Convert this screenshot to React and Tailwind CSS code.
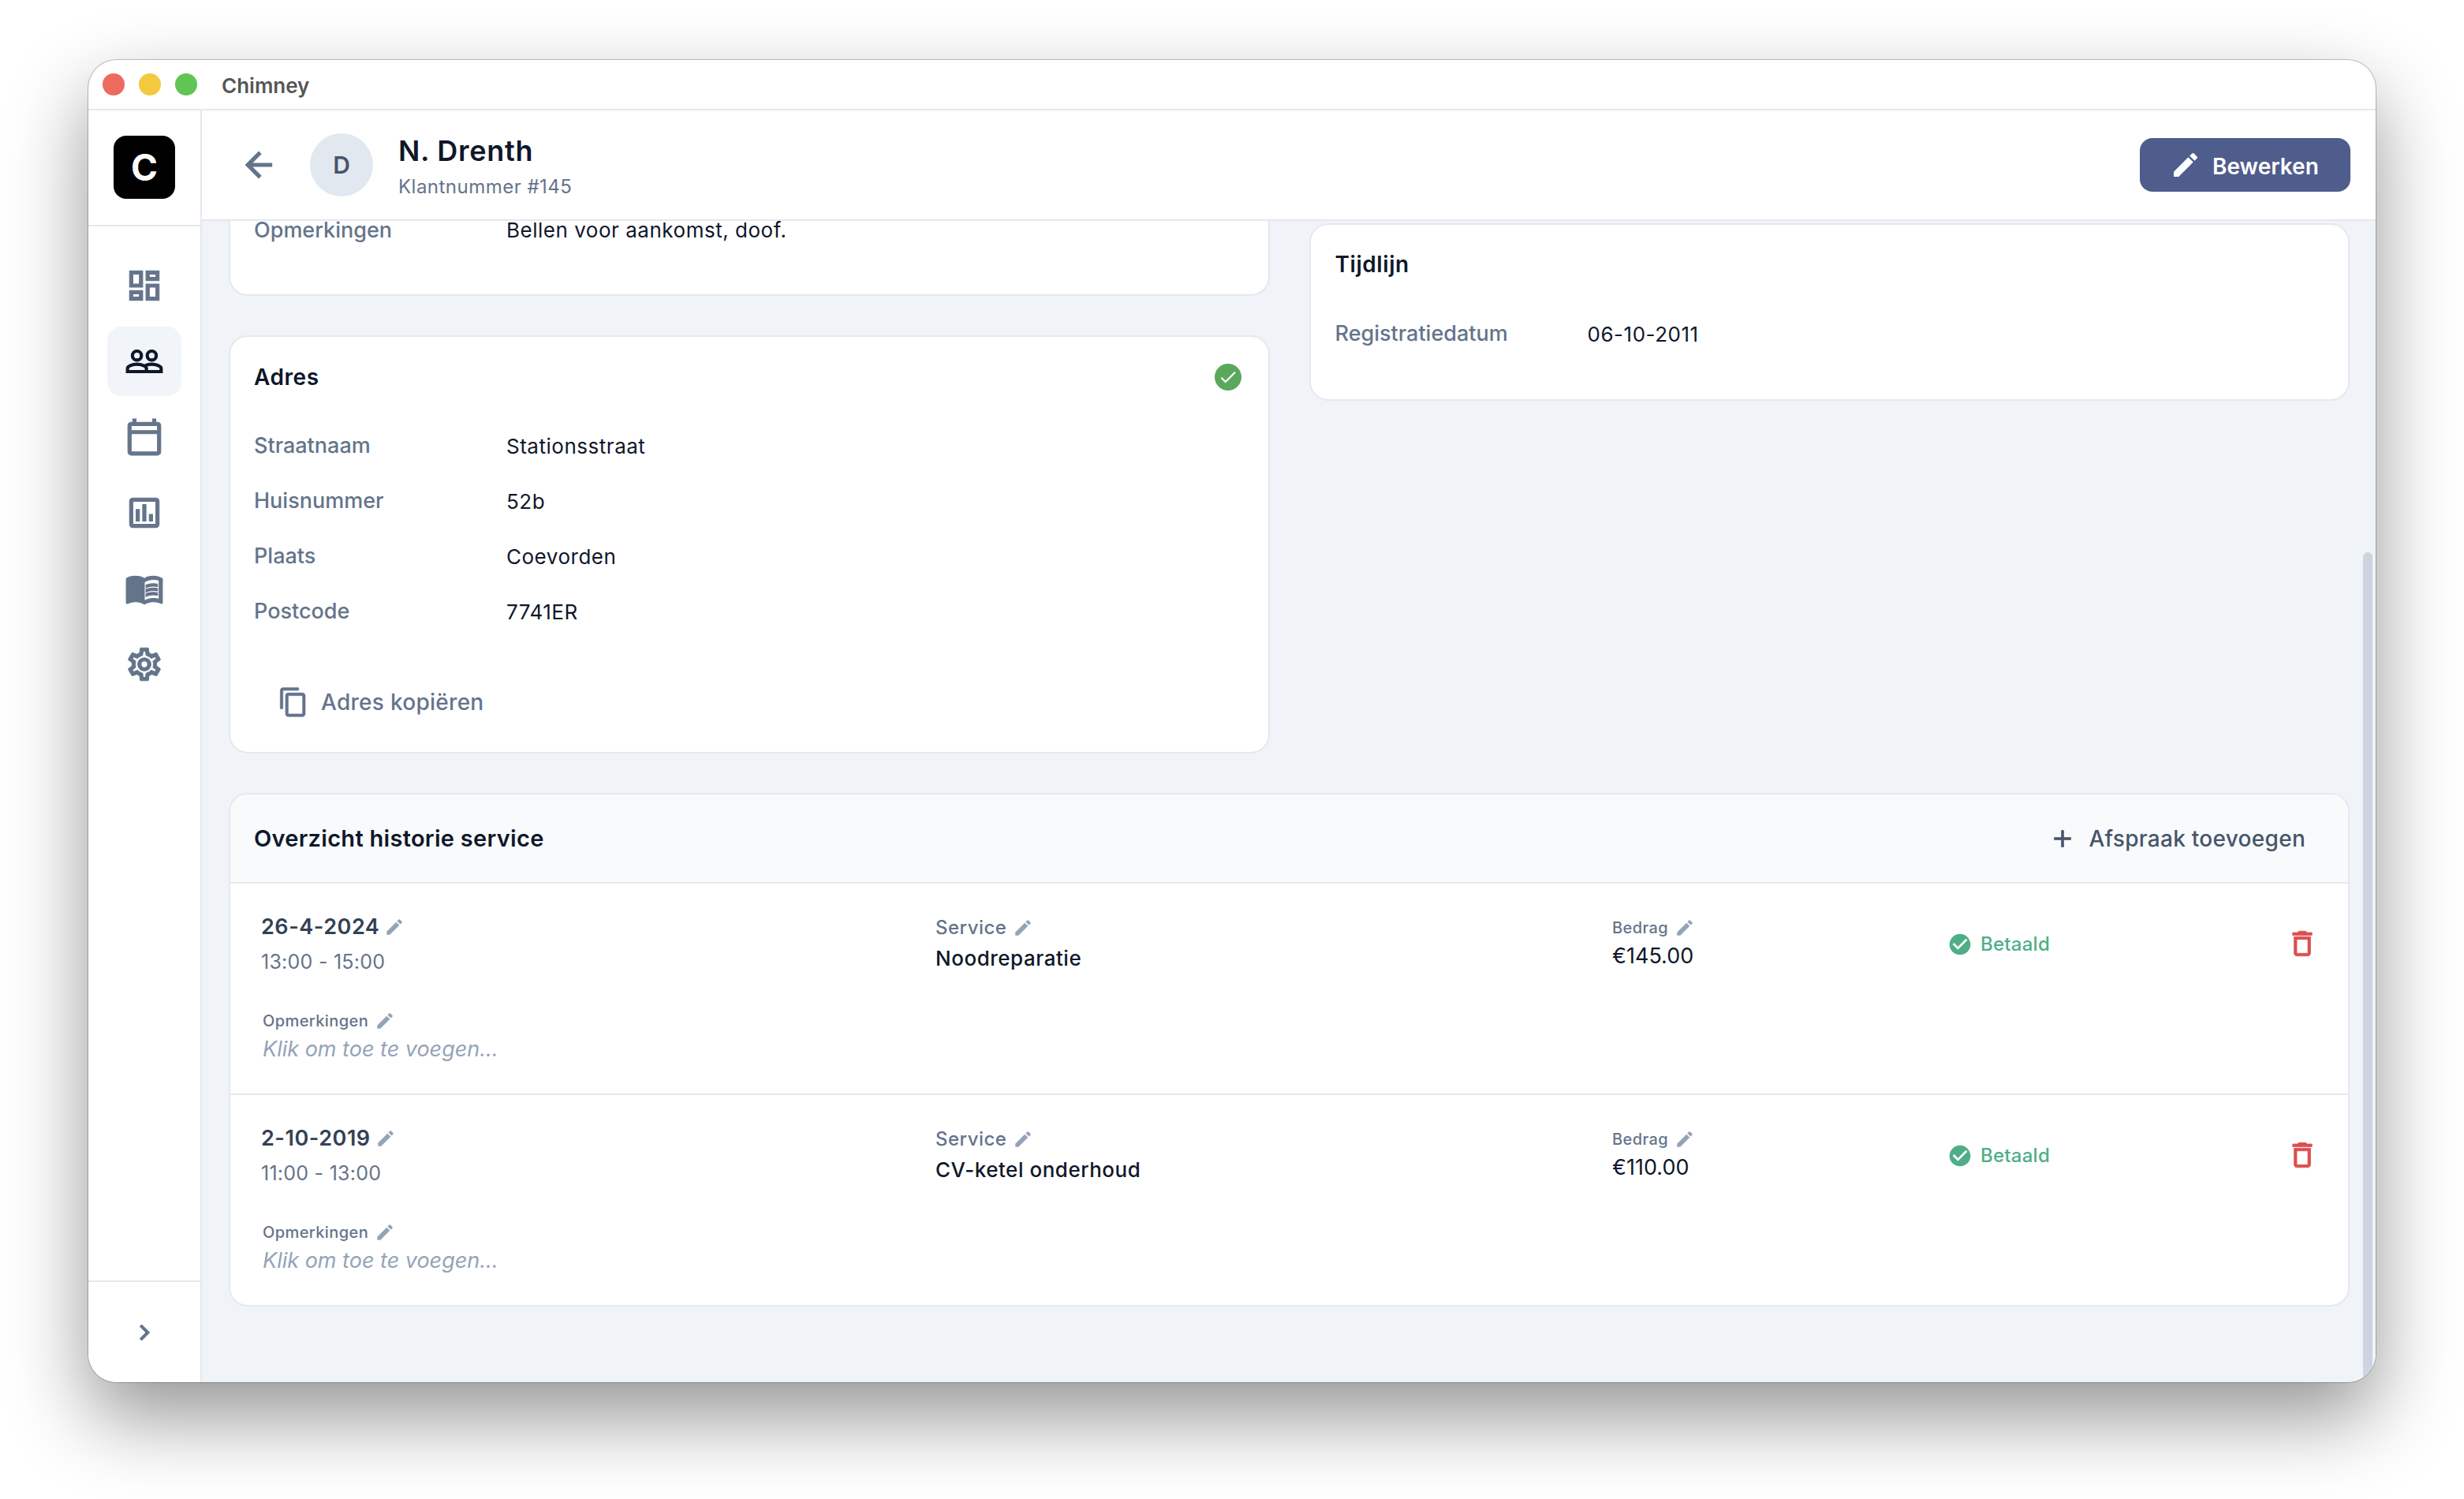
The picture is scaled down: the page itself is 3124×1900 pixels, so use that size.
import React from "react";
import {
  MdArrowBack,
  MdCheck,
  MdCheckCircle,
  MdChevronRight,
  MdEdit,
  MdMenuBook,
  MdOutlineAssessment,
  MdOutlineCalendarToday,
  MdOutlineContentCopy,
  MdOutlineDashboard,
  MdOutlineDelete,
  MdOutlineSettings,
  MdPeopleOutline,
  MdAdd,
} from "react-icons/md";

// the md icons carry an empty 24x24 path, hide it so a stroke does not draw a box
const heavy = "[&_path[fill=none]]:hidden";

const navItems = [
  { icon: MdOutlineDashboard },
  { icon: MdPeopleOutline, active: true },
  { icon: MdOutlineCalendarToday },
  { icon: MdOutlineAssessment },
  { icon: MdMenuBook },
  { icon: MdOutlineSettings },
];

const address = [
  ["Straatnaam", "Stationsstraat"],
  ["Huisnummer", "52b"],
  ["Plaats", "Coevorden"],
  ["Postcode", "7741ER"],
];

const services = [
  { date: "26-4-2024", time: "13:00 - 15:00", service: "Noodreparatie", amount: "€145.00" },
  { date: "2-10-2019", time: "11:00 - 13:00", service: "CV-ketel onderhoud", amount: "€110.00" },
];

function Sidebar() {
  return (
    <aside className="w-[144px] shrink-0 flex flex-col bg-white border-r-2 border-[#e5e8ef]">
      <div className="h-[147px] shrink-0 border-b-2 border-[#e5e8ef] pt-[32px] pl-[32px]">
        <div className="w-[78px] h-[80px] rounded-[16px] bg-black flex items-center justify-center text-white text-[46px] font-bold leading-none">
          C
        </div>
      </div>
      <nav className="flex-1 flex flex-col gap-[8px] pt-[31px] pl-[24px]">
        {navItems.map((item, i) => {
          const Icon = item.icon;
          return (
            <div
              key={i}
              className={
                item.active
                  ? "w-[94px] h-[88px] rounded-[18px] bg-[#f1f5f9] flex items-center justify-center text-[#0f172a]"
                  : "w-[94px] h-[88px] flex items-center justify-center text-[#64748b]"
              }
            >
              <Icon size={50} strokeWidth={0.5} className={heavy} />
            </div>
          );
        })}
      </nav>
      <div className="h-[129px] shrink-0 border-t-2 border-[#e5e8ef] flex items-center justify-center text-[#64748b]">
        <MdChevronRight size={40} strokeWidth={0.6} className={heavy} />
      </div>
    </aside>
  );
}

function Header() {
  return (
    <header className="h-[140px] shrink-0 bg-white border-b-2 border-[#e5e8ef] flex items-center pl-[47px] pr-[32px]">
      <MdArrowBack size={50} strokeWidth={0.5} className={heavy + " text-[#64748b] shrink-0"} />
      <div className="ml-[40px] w-[80px] h-[80px] rounded-full bg-[#e2e8f0] flex items-center justify-center text-[#475569] text-[30px] font-semibold">
        D
      </div>
      <div className="ml-[32px] pt-[4px]">
        <div className="text-[36px] leading-[44px] font-semibold text-[#0f172a] tracking-[0.02em]">N. Drenth</div>
        <div className="mt-[8px] text-[24px] leading-[32px] text-[#64748b] tracking-[0.02em]">Klantnummer #145</div>
      </div>
      <button className="ml-auto w-[267px] h-[68px] rounded-[16px] bg-[#4f5d8c] text-white flex items-center pl-[38px] text-[28px] font-semibold">
        <MdEdit size={40} className="shrink-0" />
        <span className="ml-[14px] pt-[3px]">Bewerken</span>
      </button>
    </header>
  );
}

function Field({ label, value, rowClass = "h-[40px]" }) {
  return (
    <div className={"flex items-center " + rowClass}>
      <div className="w-[320px] shrink-0 text-[27px] font-medium text-[#64748b]">{label}</div>
      <div className="text-[26px] text-[#0f172a] tracking-[0.02em]">{value}</div>
    </div>
  );
}

function AddressCard() {
  return (
    <section className="h-[530px] bg-white rounded-[24px] border-2 border-[#e5e8ef] pl-[30px] pr-[34px] pt-[31px]">
      <div className="flex items-center justify-between h-[40px]">
        <h3 className="text-[28px] font-semibold text-[#0f172a] tracking-[0.02em]">Adres</h3>
        <div className="w-[34px] h-[34px] rounded-full bg-[#5ba85c] flex items-center justify-center text-white">
          <MdCheck size={26} />
        </div>
      </div>
      <div className="mt-[47px] flex flex-col gap-[30px]">
        {address.map(([label, value]) => (
          <Field key={label} label={label} value={value} />
        ))}
      </div>
      <button className="mt-[73px] ml-[30px] flex items-center text-[#64748b] text-[28px] font-medium tracking-[0.01em] leading-[44px]">
        <MdOutlineContentCopy size={40} strokeWidth={0.4} className={heavy + " shrink-0"} />
        <span className="ml-[15px]">Adres kopiëren</span>
      </button>
    </section>
  );
}

function ServiceRow({ row, last }) {
  return (
    <div
      className={
        "grid grid-cols-[855px_858px_428px_1fr] pl-[39px] " +
        (last ? "h-[266px]" : "h-[268px] border-b-2 border-[#e5e8ef]")
      }
    >
      <div className="pt-[35px]">
        <div className="flex items-center h-[40px] text-[27px] font-semibold text-[#334155] tracking-[0.02em]">
          {row.date}
          <MdEdit size={26} className="ml-[6px] text-[#94a3b8]" />
        </div>
        <div className="mt-[6px] h-[36px] leading-[36px] text-[25px] text-[#64748b] tracking-[0.01em]">{row.time}</div>
        <div className="mt-[43px] ml-[2px] flex items-center h-[28px] text-[20px] font-medium text-[#64748b] tracking-[0.02em]">
          Opmerkingen
          <MdEdit size={26} className="ml-[8px] text-[#94a3b8]" />
        </div>
        <div className="mt-[4px] ml-[2px] h-[36px] leading-[36px] text-[27px] italic text-[#94a3b8]">Klik om toe te voegen...</div>
      </div>
      <div className="pt-[40px]">
        <div className="flex items-center h-[32px] text-[24px] font-medium text-[#64748b] tracking-[0.02em]">
          Service
          <MdEdit size={26} className="ml-[8px] text-[#94a3b8]" />
        </div>
        <div className="mt-[5px] h-[36px] leading-[36px] text-[26px] font-medium text-[#0f172a] tracking-[0.02em]">{row.service}</div>
      </div>
      <div className="pt-[42px]">
        <div className="flex items-center h-[28px] text-[20px] font-medium text-[#64748b] tracking-[0.02em]">
          Bedrag
          <MdEdit size={26} className="ml-[8px] text-[#94a3b8]" />
        </div>
        <div className="mt-[4px] h-[36px] leading-[36px] text-[27px] text-[#0f172a]">{row.amount}</div>
      </div>
      <div className="pt-[57px] flex items-start justify-between pr-[37px]">
        <div className="flex items-center h-[40px] text-[24px] font-medium text-[#4fae87] tracking-[0.01em]">
          <MdCheckCircle size={32} className="-ml-[3px]" />
          <span className="ml-[10px]">Betaald</span>
        </div>
        <MdOutlineDelete size={42} strokeWidth={0.4} className={heavy + " -mt-[2px] text-[#dc4f4f]"} />
      </div>
    </div>
  );
}

export default function App() {
  return (
    <div className="w-[3124px] h-[1900px] bg-white pt-[76px] pl-[112px] overflow-hidden font-['Inter',sans-serif]">
      <div className="relative w-[2900px] h-[1676px] rounded-[36px] overflow-hidden bg-white flex flex-col shadow-[0_0_0_1px_rgba(0,0,0,0.22),0_44px_100px_rgba(0,0,0,0.42)]">
        {/* title bar */}
        <div className="h-[64px] shrink-0 border-b-2 border-[#e5e8ef] flex items-center pl-[18px]">
          <div className="flex gap-[18px]">
            <span className="w-[28px] h-[28px] rounded-full bg-[#ec6a5e]" />
            <span className="w-[28px] h-[28px] rounded-full bg-[#f4c83f]" />
            <span className="w-[28px] h-[28px] rounded-full bg-[#61c454]" />
          </div>
          <span className="ml-[31px] pt-[2px] text-[26px] font-semibold text-[#555555]">Chimney</span>
        </div>

        <div className="flex-1 flex min-h-0">
          <Sidebar />
          <main className="flex-1 min-w-0 flex flex-col">
            <Header />
            <div className="relative flex-1 min-h-0 bg-[#f0f4f8] pl-[34px] pr-[33px]">
              <div className="grid grid-cols-2 gap-x-[50px]">
                <div>
                  {/* card is scrolled under the header, only its bottom shows */}
                  <section className="h-[95px] bg-white rounded-b-[24px] border-2 border-t-0 border-[#e5e8ef] pl-[30px]">
                    <Field label="Opmerkingen" value="Bellen voor aankomst, doof." rowClass="h-[24px] leading-[24px]" />
                  </section>
                  <div className="mt-[50px]">
                    <AddressCard />
                  </div>
                </div>
                <section className="mt-[3px] h-[225px] bg-white rounded-[24px] border-2 border-[#e5e8ef] pl-[31px] pt-[30px] self-start">
                  <h3 className="h-[40px] leading-[40px] text-[28px] font-semibold text-[#0f172a] tracking-[0.02em]">Tijdlijn</h3>
                  <div className="mt-[48px]">
                    <Field label="Registratiedatum" value="06-10-2011" />
                  </div>
                </section>
              </div>

              <section className="mt-[50px] bg-white rounded-[24px] border-2 border-[#e5e8ef] overflow-hidden">
                <div className="h-[113px] bg-[#f8fafc] border-b-2 border-[#e5e8ef] flex items-center justify-between pl-[30px] pr-[54px]">
                  <h3 className="text-[29px] font-semibold text-[#0f172a] tracking-[0.01em]">Overzicht historie service</h3>
                  <button className="flex items-center text-[28px] font-medium text-[#475569] tracking-[0.01em]">
                    <MdAdd size={36} strokeWidth={0.4} className={heavy} />
                    <span className="ml-[16px]">Afspraak toevoegen</span>
                  </button>
                </div>
                {services.map((row, i) => (
                  <ServiceRow key={row.date} row={row} last={i === services.length - 1} />
                ))}
              </section>

              {/* scrollbar */}
              <div className="absolute right-[4px] top-[420px] bottom-0 w-[12px] rounded-t-full bg-[#cdd3e0]" />
            </div>
          </main>
        </div>
      </div>
    </div>
  );
}
